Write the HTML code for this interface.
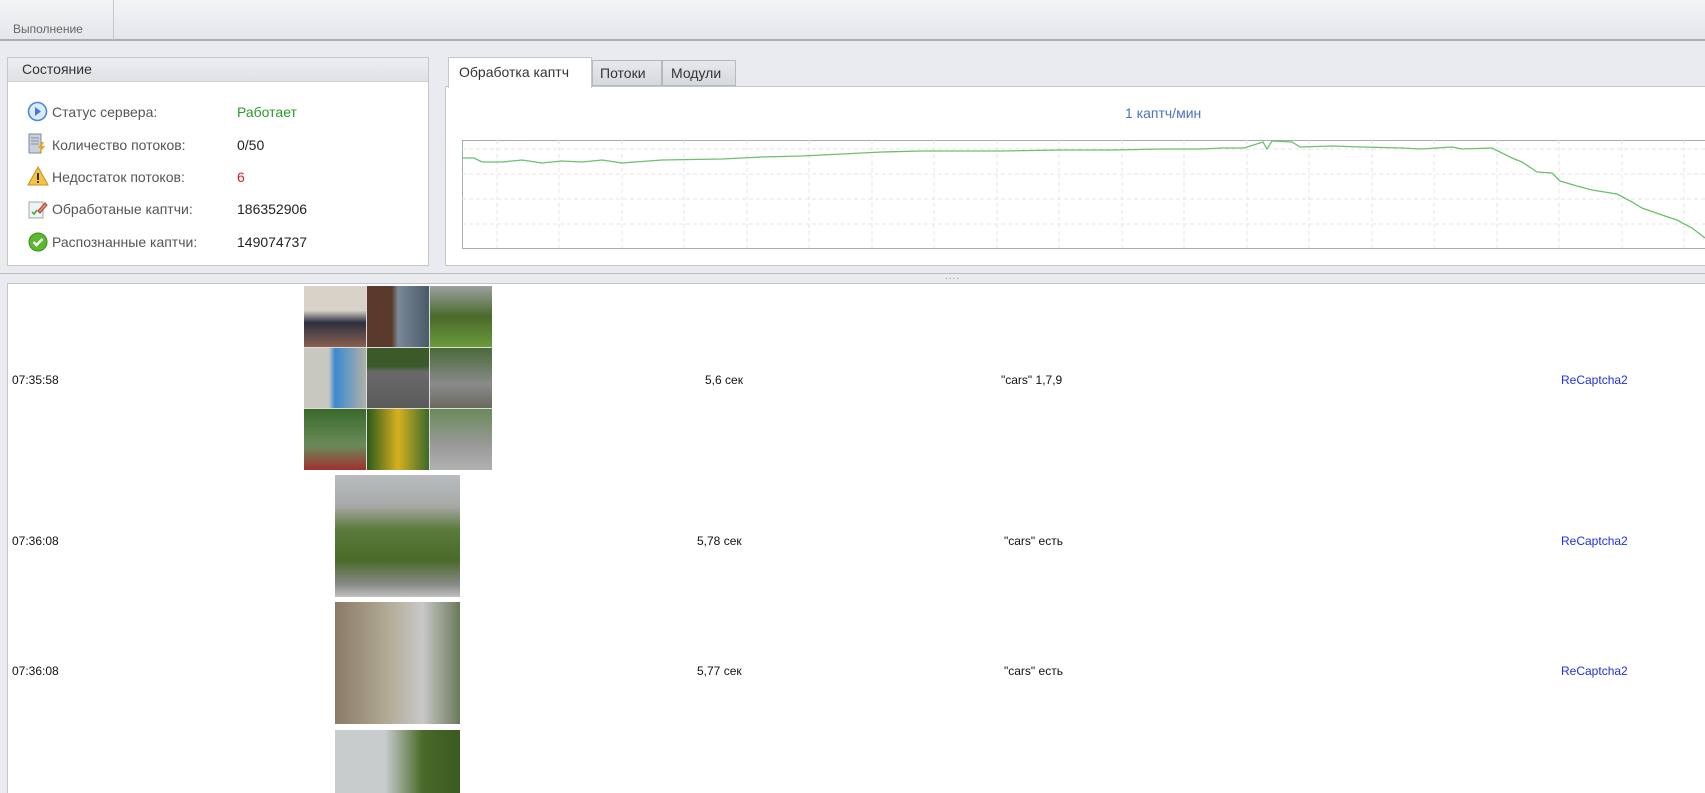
<!DOCTYPE html>
<html><head><meta charset="utf-8"><style>
*{margin:0;padding:0;box-sizing:border-box}
html,body{width:1705px;height:793px;overflow:hidden}
body{background:#e9ebef;font-family:"Liberation Sans","DejaVu Sans",sans-serif;position:relative}
.abs{position:absolute}
.top{left:0;top:0;width:1705px;height:41px;background:linear-gradient(#f3f4f6,#e4e6ea);border-bottom:2px solid #a9adb4}
.lbl{font-size:14px;color:#555}
.val{font-size:14px;color:#222}
.small{font-size:12px;color:#111}
</style></head><body>
<div class="abs top"></div>
<div class="abs" style="left:113px;top:0;width:1px;height:40px;background:#c4c7cc"></div>
<div class="abs" style="left:13px;top:22px;font-size:12px;color:#666">Выполнение</div>

<div class="abs" style="left:7px;top:57px;width:422px;height:209px;background:#fff;border:1px solid #c3c6cc"></div>
<div class="abs" style="left:8px;top:58px;width:420px;height:24px;background:linear-gradient(#eceef1,#dfe1e5);border-bottom:1px solid #d0d3d8"></div>
<div class="abs" style="left:22px;top:61px;font-size:14px;color:#333">Состояние</div>

<svg class="abs" style="left:27px;top:101px" width="21" height="21"><circle cx="10.5" cy="10.5" r="9" fill="#dbe9fa" stroke="#4a8ad8" stroke-width="1.6"/><path d="M8 6l6 4.5-6 4.5z" fill="#3a7fd2"/></svg>
<div class="abs lbl" style="left:52px;top:104px">Статус сервера:</div>
<div class="abs val" style="left:237px;top:104px;color:#2a9a2a">Работает</div>

<svg class="abs" style="left:28px;top:133px" width="20" height="22"><rect x="1" y="1" width="12" height="19" fill="#c9d2dc" stroke="#7f8b98"/><path d="M3 5h8M3 8h8M3 11h8" stroke="#8090a0"/><path d="M14 9l-4 6h3l-2 6 6-8h-3l2-4z" fill="#f0a020"/></svg>
<div class="abs lbl" style="left:52px;top:137px">Количество потоков:</div>
<div class="abs val" style="left:237px;top:137px">0/50</div>

<svg class="abs" style="left:27px;top:166px" width="22" height="20"><path d="M11 1L21 19H1z" fill="#f5c542" stroke="#c9921a"/><rect x="10" y="7" width="2" height="7" fill="#333"/><rect x="10" y="15" width="2" height="2" fill="#333"/></svg>
<div class="abs lbl" style="left:52px;top:169px">Недостаток потоков:</div>
<div class="abs val" style="left:237px;top:169px;color:#d02020">6</div>

<svg class="abs" style="left:28px;top:199px" width="20" height="21"><rect x="1" y="3" width="14" height="16" fill="#f2f2f2" stroke="#9aa"/><path d="M4 13l2 2 3-4" stroke="#3a3" fill="none" stroke-width="1.5"/><path d="M10 12l7-8 2 2-7 8z" fill="#e8a030" stroke="#a36"/></svg>
<div class="abs lbl" style="left:52px;top:201px">Обработаные каптчи:</div>
<div class="abs val" style="left:237px;top:201px">186352906</div>

<svg class="abs" style="left:28px;top:232px" width="20" height="20"><circle cx="10" cy="10" r="9" fill="#5cb82e" stroke="#3a8a1a"/><path d="M5.5 10l3 3 6-6" stroke="#fff" stroke-width="2.4" fill="none"/></svg>
<div class="abs lbl" style="left:52px;top:234px">Распознанные каптчи:</div>
<div class="abs val" style="left:237px;top:234px">149074737</div>

<div class="abs" style="left:445px;top:86px;width:1260px;height:180px;background:#fff;border:1px solid #c3c6cc;border-right:none"></div>
<div class="abs" style="left:448px;top:57px;width:144px;height:31px;background:#fff;border:1px solid #c3c6cc;border-bottom:none"></div>
<div class="abs" style="left:459px;top:64px;font-size:14px;color:#333">Обработка каптч</div>
<div class="abs" style="left:592px;top:60px;width:70px;height:26px;background:linear-gradient(#e7e9ec,#d5d8dd);border:1px solid #b5b9bf"></div>
<div class="abs" style="left:600px;top:65px;font-size:14px;color:#333">Потоки</div>
<div class="abs" style="left:662px;top:60px;width:74px;height:26px;background:linear-gradient(#e7e9ec,#d5d8dd);border:1px solid #b5b9bf"></div>
<div class="abs" style="left:671px;top:65px;font-size:14px;color:#333">Модули</div>

<div class="abs" style="left:1125px;top:105px;font-size:14px;color:#4a70c8">1 каптч/мин</div>

<svg class="abs" style="left:462px;top:140px" width="1243" height="109">
<rect x="0.5" y="0.5" width="1250" height="108" fill="#fff" stroke="#a7abb2"/>
<g stroke="#e6e6e6" stroke-dasharray="4,3">
<path d="M0 9H1243M0 34H1243M0 59H1243M0 84H1243"/>
<path d="M35 0V108M97 0V108M160 0V108M222 0V108M285 0V108M347 0V108M410 0V108M472 0V108M535 0V108M597 0V108M660 0V108M722 0V108M785 0V108M847 0V108M910 0V108M972 0V108M1035 0V108M1097 0V108M1160 0V108M1222 0V108"/>
</g>
<polyline fill="none" stroke="#6cc06c" stroke-width="1.3" points="0,18 12,18 20,22 40,22 60,20 80,23 100,21 120,22 140,20 160,23 200,20 260,19 300,17 340,16 380,14 420,12 460,11 500,11 540,11 600,10 650,10 700,9 740,9 760,8 782,8 801,2 805,9 810,1 830,2 838,7 870,6 900,7 940,8 960,9 990,7 1000,9 1030,8 1050,18 1060,22 1075,32 1090,33 1098,41 1115,46 1130,50 1155,54 1170,62 1180,68 1200,75 1215,80 1230,88 1243,98"/>
</svg>

<div class="abs" style="left:0;top:273px;width:1705px;height:1px;background:#b8bcc2"></div>
<div class="abs" style="left:945px;top:271px;font-size:10px;color:#888;letter-spacing:1px">....</div>

<div class="abs" style="left:7px;top:283px;width:1698px;height:510px;background:#fff;border-left:1px solid #c3c6cc;border-top:1px solid #c3c6cc"></div>

<div class="abs small" style="left:12px;top:373px">07:35:58</div>
<div class="abs small" style="left:705px;top:373px">5,6 сек</div>
<div class="abs small" style="left:1001px;top:373px">"cars" 1,7,9</div>
<div class="abs small" style="left:1561px;top:373px;color:#2030e0">ReCaptcha2</div>

<div class="abs" style="left:304px;top:286px;width:188px;height:184px;display:grid;grid-template-columns:repeat(3,1fr);grid-template-rows:repeat(3,1fr);gap:1px;background:#ddd">
<div style="background:linear-gradient(#d8d2c8 40%,#2c3040 60%,#8a6050)"></div>
<div style="background:linear-gradient(90deg,#5a3a2a 40%,#7a8898 50%,#4a5a68)"></div>
<div style="background:linear-gradient(#9aa0a0,#4a6a2a 50%,#6a9a3a)"></div>
<div style="background:linear-gradient(90deg,#c8c8c0 40%,#3a8ad0 50%,#b0b0a8)"></div>
<div style="background:linear-gradient(#3a5a2a 30%,#6a6a6a 40%,#5a5a5a)"></div>
<div style="background:linear-gradient(#4a6a3a,#8a8a8a 60%,#6a6a60)"></div>
<div style="background:linear-gradient(#3a6a2a,#6a8a5a 60%,#a03030)"></div>
<div style="background:linear-gradient(90deg,#2a5a1a,#d8b020 50%,#3a6a2a)"></div>
<div style="background:linear-gradient(#6a8a5a,#9a9a9a 60%,#b0b0b0)"></div>
</div>

<div class="abs small" style="left:12px;top:534px">07:36:08</div>
<div class="abs small" style="left:697px;top:534px">5,78 сек</div>
<div class="abs small" style="left:1004px;top:534px">"cars" есть</div>
<div class="abs small" style="left:1561px;top:534px;color:#2030e0">ReCaptcha2</div>
<div class="abs" style="left:335px;top:475px;width:125px;height:122px;background:linear-gradient(#b8bcc0 0%,#a8aaa8 25%,#5a7a3a 45%,#4a6a2a 70%,#8a8a88 90%,#c0c0c0)"></div>

<div class="abs small" style="left:12px;top:664px">07:36:08</div>
<div class="abs small" style="left:697px;top:664px">5,77 сек</div>
<div class="abs small" style="left:1004px;top:664px">"cars" есть</div>
<div class="abs small" style="left:1561px;top:664px;color:#2030e0">ReCaptcha2</div>
<div class="abs" style="left:335px;top:602px;width:125px;height:122px;background:linear-gradient(90deg,#8a7a68 0%,#b0a890 40%,#c8c8c8 70%,#6a7a5a),#999"></div>

<div class="abs" style="left:335px;top:730px;width:125px;height:63px;background:linear-gradient(90deg,#c8cccc 40%,#4a6a2a 70%,#3a5a20)"></div>
</body></html>
